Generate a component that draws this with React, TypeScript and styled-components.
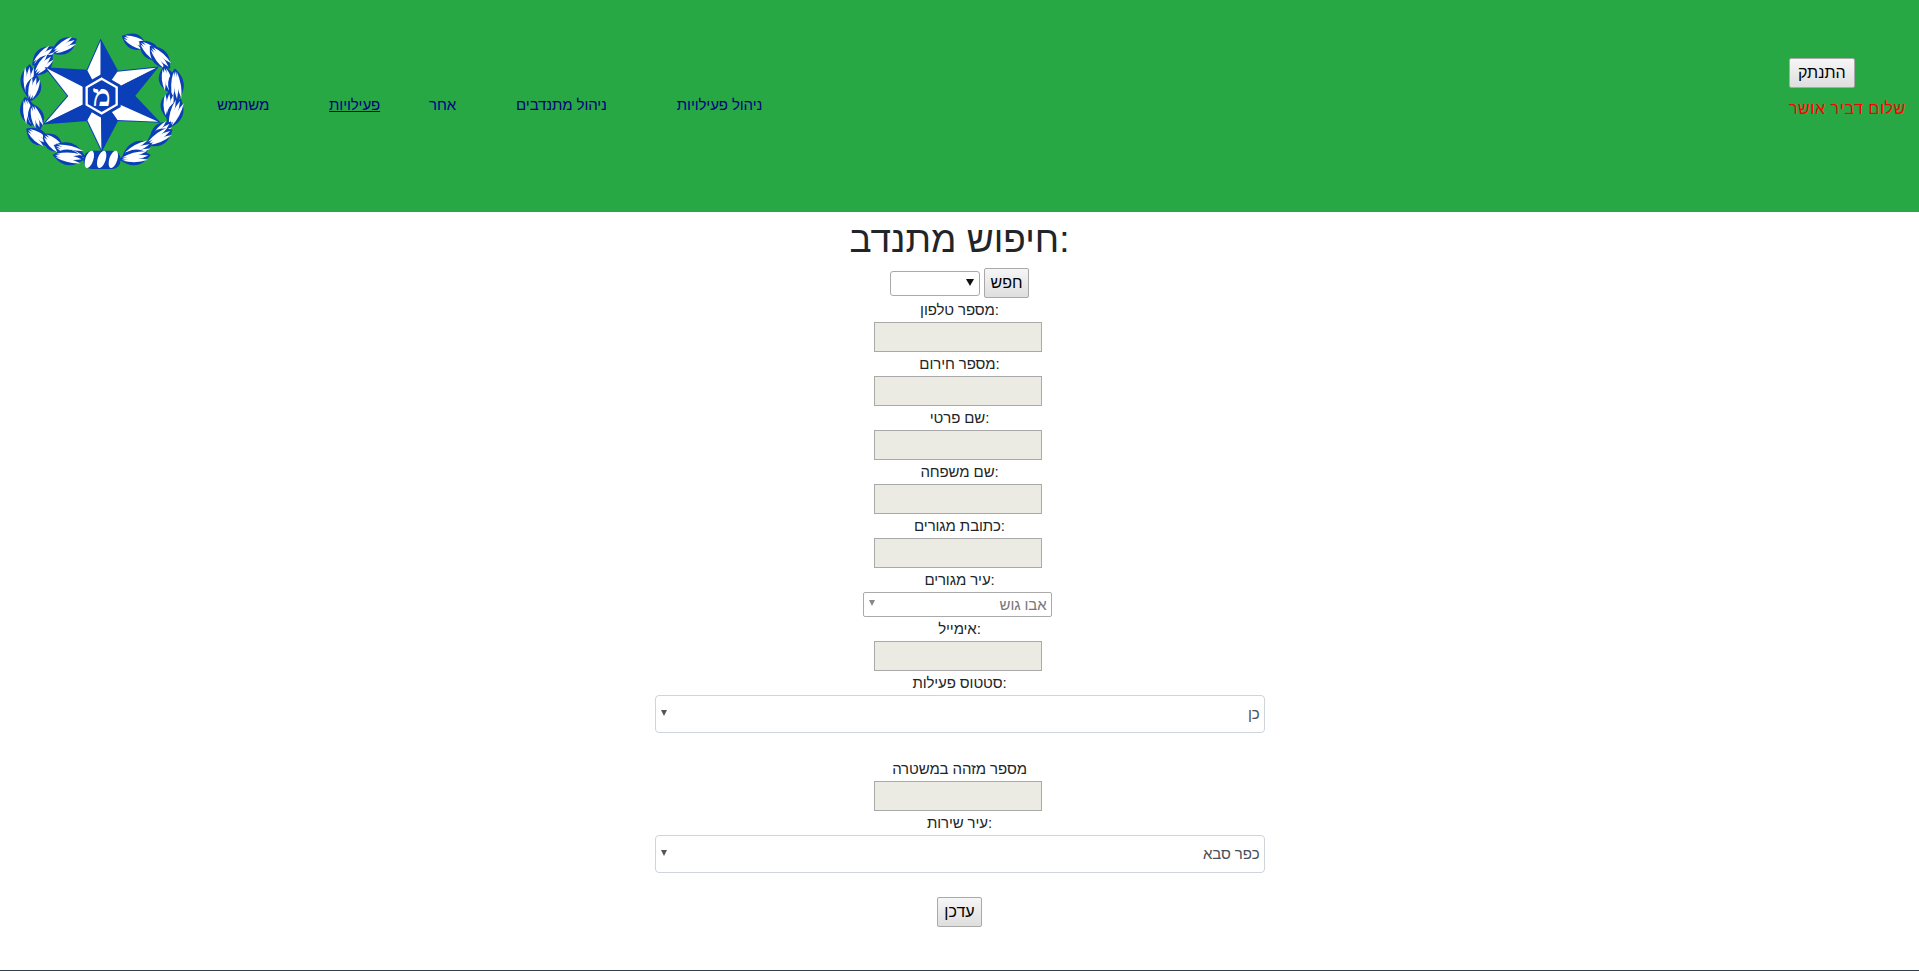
import React from "react";
import styled, { createGlobalStyle } from "styled-components";

const Global = createGlobalStyle`
  html, body { margin: 0; padding: 0; background: #fff; }
  body { font-family: "Liberation Sans", Arial, sans-serif; font-size: 15px; letter-spacing: -0.1px; line-height: 24px; color: #212529; overflow: hidden; }
`;

const Page = styled.div`
  height: 971px;
  display: flex;
  flex-direction: column;
`;
const Header = styled.header`
  height: 212px;
  background: #28a745;
  display: flex;
  align-items: flex-start;
  padding-top: 20px;
  box-sizing: border-box;
`;
const Logo = styled.svg`
  width: 200px;
  height: 160px;
  flex: none;
`;
const Nav = styled.nav`
  display: flex;
  margin-top: 73px;
  margin-left: 17px;
`;
const NavLink = styled.a<{ $gap: number; $active?: boolean }>`
  margin-right: ${(p) => p.$gap}px;
  color: #000080;
  font-size: 15px;
  line-height: 24px;
  text-decoration: ${(p) => (p.$active ? "underline" : "none")};
  white-space: nowrap;
`;
const UserBlock = styled.div`
  margin-left: auto;
  width: 130px;
  padding-top: 38px;
  display: flex;
  flex-direction: column;
  align-items: flex-start;
`;
const Button = styled.button<{ $pad?: number }>`
  height: 30px;
  padding: 0 ${(p) => p.$pad ?? 8}px;
  border: 1px solid #a9a9a9;
  border-radius: 2px;
  background: linear-gradient(#f6f6f6, #dedede);
  font: 16px "Liberation Sans", Arial, sans-serif;
  color: #000;
`;
const Greeting = styled.div`
  margin-top: 9px;
  color: #ff0000;
  font: 16px/24px "Liberation Sans", Arial, sans-serif;
  letter-spacing: 0.55px;
  white-space: nowrap;
`;
const Main = styled.main`
  display: flex;
  flex-direction: column;
  align-items: center;
  flex: 1;
`;
const Title = styled.h1`
  margin: 0;
  height: 56px;
  font-size: 37px;
  letter-spacing: 0;
  font-weight: 400;
  line-height: 56px;
  color: #212529;
`;
const SearchRow = styled.div`
  display: flex;
  align-items: center;
  gap: 4px;
  height: 30px;
`;
const SelectWrap = styled.div`
  position: relative;
  height: 25px;
`;
const SmallSelect = styled.select`
  display: block;
  width: 90px;
  height: 25px;
  appearance: none;
  background: #fff;
  border: 1px solid #a9a9a9;
  border-radius: 3px;
`;
const SelectCaret = styled.span`
  position: absolute;
  right: 6px;
  top: 8px;
  border-left: 4px solid transparent;
  border-right: 4px solid transparent;
  border-top: 7px solid #111;
`;
const Label = styled.label`
  display: block;
  line-height: 24px;
  white-space: nowrap;
`;
const TextBox = styled.input`
  display: block;
  box-sizing: border-box;
  width: 168px;
  height: 30px;
  margin-right: 4px;
  background: #ebebe4;
  border: 1px solid #a9a9a9;
  padding: 1px 2px;
`;
const Combo = styled.div<{ $wide?: boolean; $dark?: boolean }>`
  box-sizing: border-box;
  display: flex;
  justify-content: space-between;
  width: ${(p) => (p.$wide ? 610 : 189)}px;
  height: ${(p) => (p.$wide ? 38 : 25)}px;
  margin-right: ${(p) => (p.$wide ? 0 : 5)}px;
  padding: ${(p) => (p.$wide ? "6px 4px 6px 5px" : "0 4px 0 5px")};
  border: 1px solid ${(p) => (p.$wide ? "#ced4da" : "#aaa")};
  border-radius: ${(p) => (p.$wide ? 4 : 2)}px;
  background: #fff;
  color: ${(p) => (p.$dark ? "#495057" : "#777")};
  line-height: 24px;
`;
const Arrow = styled.span<{ $light?: boolean }>`
  margin-top: ${(p) => (p.$light ? 7 : 8)}px;
  width: 0;
  height: 0;
  border-left: 3px solid transparent;
  border-right: 3px solid transparent;
  border-top: 6px solid ${(p) => (p.$light ? "#888" : "#555")};
`;
const Spaced = styled.div`
  margin-top: 24px;
  display: flex;
  flex-direction: column;
  align-items: center;
`;
const Submit = styled(Button)`
  margin-top: 24px;
`;
const FooterLine = styled.div`
  height: 1px;
  background: #2c3e50;
`;

const BLUE = "#0a3fb8";
const C: [number, number] = [302, 228];
const pts: Record<string, [number, number]> = {
  T: [302, 62], I1: [352, 155], UR: [470, 143], I2: [402, 228], LR: [475, 305], I3: [352, 300],
  B: [305, 390], I4: [262, 300], LL: [135, 310], I5: [205, 228], UL: [140, 145], I6: [262, 152],
};
const facets: [string, string, string][] = [
  ["T", "I6", "#fff"], ["T", "I1", BLUE], ["UR", "I1", "#fff"], ["UR", "I2", BLUE],
  ["LR", "I2", BLUE], ["LR", "I3", "#fff"], ["B", "I4", "#fff"], ["B", "I3", BLUE],
  ["LL", "I5", "#fff"], ["LL", "I4", BLUE], ["UL", "I6", BLUE], ["UL", "I5", "#fff"],
];
// x, y, angle, half length of each leaf group, in the crop units of the logo
const clusters: [number, number, number, number][] = [
  [193, 78, -30, 38], [130, 108, -40, 38], [130, 135, -48, 36], [85, 180, -85, 42], [100, 205, -75, 36], [84, 275, 78, 40], [108, 290, 72, 36],
  [112, 350, 36, 36], [158, 368, 42, 34], [208, 392, 20, 44], [205, 412, 8, 42],
  [403, 65, 24, 36], [450, 92, 42, 38], [480, 112, 48, 40], [500, 178, 78, 36], [528, 195, 86, 44], [505, 255, -85, 36], [525, 280, -68, 42],
  [482, 335, -42, 38], [478, 352, -30, 40], [412, 388, -22, 42], [405, 412, -8, 42],
];
const lens = (l: number, w: number) => `M${-l} 0Q0 ${-w} ${l} 0Q0 ${w} ${-l} 0Z`;
const hex = (r: number) =>
  [0, 1, 2, 3, 4, 5]
    .map((i) => {
      const a = (Math.PI / 3) * i - Math.PI / 2;
      return `${305 + r * Math.cos(a)},${228 + r * Math.sin(a)}`;
    })
    .join(" ");

function PoliceLogo() {
  return (
    <Logo viewBox="0 0 600 480">
      {clusters.map(([x, y, a, l], i) => (
        <g key={i} transform={`translate(${x} ${y}) rotate(${a})`}>
          <path d={lens(l + 2, 42)} fill={BLUE} stroke={BLUE} strokeWidth={5} />
          <path d={lens(l - 4, 11)} transform="translate(0 -9) rotate(-6)" fill="#fff" />
          <path d={lens(l - 2, 13)} fill="#fff" />
          <path d={lens(l - 4, 11)} transform="translate(0 9) rotate(6)" fill="#fff" />
        </g>
      ))}
      <rect x={250} y={392} width={112} height={55} rx={26} fill={BLUE} />
      {[268, 305, 340].map((x) => (
        <ellipse key={x} cx={x} cy={418} rx={12} ry={27} fill="#fff" transform={`rotate(18 ${x} 418)`} />
      ))}
      <polygon
        points={["T", "I1", "UR", "I2", "LR", "I3", "B", "I4", "LL", "I5", "UL", "I6"].map((k) => pts[k].join(",")).join(" ")}
        fill={BLUE}
        stroke={BLUE}
        strokeWidth={6}
        strokeLinejoin="miter"
      />
      {facets.map(([a, b, f]) => (
        <polygon key={a + b} points={`${pts[a].join(",")} ${pts[b].join(",")} ${C.join(",")}`} fill={f} />
      ))}
      <polygon points={hex(66)} fill={BLUE} />
      <polygon points={hex(52)} fill="none" stroke="#fff" strokeWidth={7} />
      <text x={305} y={258} textAnchor="middle" fontSize={92} fontWeight={700} fill="#fff" fontFamily="Liberation Serif, serif">
        מ
      </text>
    </Logo>
  );
}

const navItems = [
  { text: "משתמש", gap: 60 },
  { text: "פעילויות", gap: 49, active: true },
  { text: "אחר", gap: 60 },
  { text: "ניהול מתנדבים", gap: 70 },
  { text: "ניהול פעילויות", gap: 0 },
];

export default function App() {
  return (
    <Page>
      <Global />
      <Header>
        <PoliceLogo />
        <Nav>
          {navItems.map((n) => (
            <NavLink key={n.text} href="#" $gap={n.gap} $active={n.active}>
              {n.text}
            </NavLink>
          ))}
        </Nav>
        <UserBlock>
          <Button>התנתק</Button>
          <Greeting>שלום דביר אושר</Greeting>
        </UserBlock>
      </Header>
      <Main>
        <Title>חיפוש מתנדב:</Title>
        <SearchRow>
          <SelectWrap>
            <SmallSelect />
            <SelectCaret />
          </SelectWrap>
          <Button $pad={6}>חפש</Button>
        </SearchRow>
        <Label>מספר טלפון:</Label>
        <TextBox disabled />
        <Label>מספר חירום:</Label>
        <TextBox disabled />
        <Label>שם פרטי:</Label>
        <TextBox disabled />
        <Label>שם משפחה:</Label>
        <TextBox disabled />
        <Label>כתובת מגורים:</Label>
        <TextBox disabled />
        <Label>עיר מגורים:</Label>
        <Combo>
          <Arrow $light />
          <span>אבו גוש</span>
        </Combo>
        <Label>אימייל:</Label>
        <TextBox disabled />
        <Label>סטטוס פעילות:</Label>
        <Combo $wide $dark>
          <Arrow />
          <span>כן</span>
        </Combo>
        <Spaced>
          <Label>מספר מזהה במשטרה</Label>
          <TextBox disabled />
          <Label>עיר שירות:</Label>
          <Combo $wide $dark>
            <Arrow />
            <span>כפר סבא</span>
          </Combo>
        </Spaced>
        <Submit $pad={6}>עדכן</Submit>
      </Main>
      <FooterLine />
    </Page>
  );
}
